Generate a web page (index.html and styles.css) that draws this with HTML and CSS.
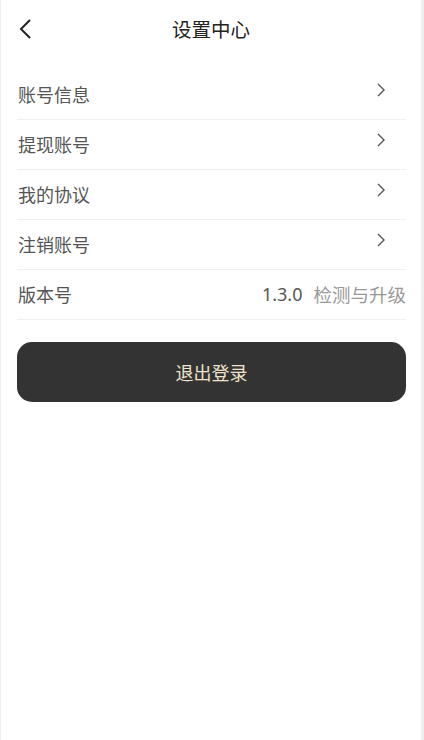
FILE: index.html
```html
<!DOCTYPE html>
<html lang="zh">
<head>
<meta charset="utf-8">
<link rel="stylesheet" href="styles.css">
</head>
<body>
<div class="page">
  <header class="nav">
    <svg class="back" width="16" height="22" viewBox="0 0 16 22"><path d="M12 2 L3 11 L12 20" fill="none" stroke="#222" stroke-width="2"/></svg>
    <h1 class="title">设置中心</h1>
  </header>
  <ul class="list">
    <li class="row"><span class="label">账号信息</span><svg class="chev" width="10" height="16" viewBox="0 0 10 16"><path d="M2 2 L8 8 L2 14" fill="none" stroke="#555" stroke-width="1.4"/></svg></li>
    <li class="row"><span class="label">提现账号</span><svg class="chev" width="10" height="16" viewBox="0 0 10 16"><path d="M2 2 L8 8 L2 14" fill="none" stroke="#555" stroke-width="1.4"/></svg></li>
    <li class="row"><span class="label">我的协议</span><svg class="chev" width="10" height="16" viewBox="0 0 10 16"><path d="M2 2 L8 8 L2 14" fill="none" stroke="#555" stroke-width="1.4"/></svg></li>
    <li class="row"><span class="label">注销账号</span><svg class="chev" width="10" height="16" viewBox="0 0 10 16"><path d="M2 2 L8 8 L2 14" fill="none" stroke="#555" stroke-width="1.4"/></svg></li>
    <li class="row"><span class="label">版本号</span><span class="ver"><span class="num">1.3.0</span><span class="upd">检测与升级</span></span></li>
  </ul>
  <button class="logout">退出登录</button>
</div>
</body>
</html>
```
FILE: styles.css
```css
* { box-sizing: border-box; }
html, body { margin: 0; padding: 0; background: #fff; }
body {
  font-family: "Noto Sans CJK SC", "Noto Sans", sans-serif;
}
.page {
  width: 424px;
  height: 740px;
  border-left: 1px solid #f0f0f0;
  border-right: 3px solid #efefef;
  background: #fff;
}
.nav {
  height: 60px;
  display: flex;
  align-items: center;
  justify-content: center;
  position: relative;
}
.back { position: absolute; left: 17px; top: 18px; }
.title {
  margin: -3px 0 0;
  font-size: 19.5px;
  font-weight: 400;
  color: #222;
}
.list {
  list-style: none;
  margin: 10px 0 0;
  padding: 0 15px 0 16px;
}
.row {
  height: 50px;
  display: flex;
  align-items: center;
  justify-content: space-between;
  border-bottom: 1px solid #f0f0f0;
  padding-bottom: 1px;
}
.label {
  font-size: 18px;
  color: #555;
  margin-left: 1px;
}
.chev { margin-right: 20px; margin-top: -8px; }
.ver { display: flex; align-items: center; gap: 11px; }
.num { font-size: 18px; color: #555; font-family: "Noto Sans", sans-serif; }
.upd { font-size: 18.5px; color: #999; }
.logout {
  display: block;
  margin: 22px 15px 0 16px;
  width: 389px;
  height: 60px;
  border: none;
  border-radius: 15px;
  background: #333;
  color: #eee2cc;
  font-family: "Noto Sans CJK SC", sans-serif;
  font-size: 18px;
}
```
